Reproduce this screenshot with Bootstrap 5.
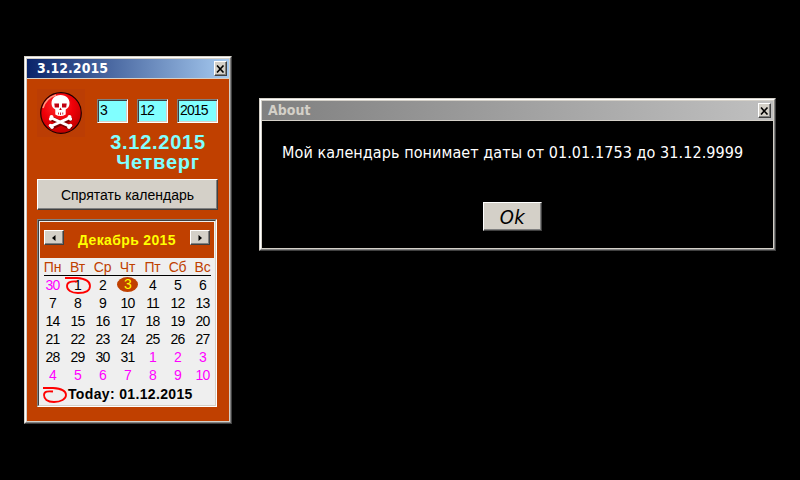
<!DOCTYPE html>
<html lang="ru">
<head>
<meta charset="utf-8">
<title>Календарь</title>
<link href="https://cdn.jsdelivr.net/npm/bootstrap@5.3.0/dist/css/bootstrap.min.css" rel="stylesheet">
<style>
body{background:#000;width:800px;height:480px;font-family:"Liberation Sans",Arial,sans-serif;font-size:14px;line-height:18px;color:#000}
.win{border:1px solid;border-color:#d4d0c8 #404040 #404040 #d4d0c8}
.win-edge{border:1px solid;border-color:#fff #808080 #808080 #fff}
.win-client{border:1px solid #d4d0c8}
.win-cal{left:24px;top:56px;width:208px;height:368px}
.win-about{left:259px;top:98px;width:517px;height:153px}
.title-strip{height:20px;border-bottom:1px solid #d4d0c8;font:bold 14px/19px "DejaVu Sans Condensed","DejaVu Sans",sans-serif;font-stretch:condensed}
.win-cal .title-strip{background:linear-gradient(90deg,#0a246a,#a6caf0);color:#fff;padding:0 2px 0 10px}
.win-about .title-strip{background:linear-gradient(90deg,#808080,#c0c0c0);color:#d4d0c8;padding:0 2px 0 6px}
.key{background:#d4d0c8;border:1px solid;border-color:#fff #404040 #404040 #fff;box-shadow:inset -1px -1px #808080;border-radius:0;padding:0;color:#000;display:flex;align-items:center;justify-content:center;line-height:1}
.key-x{width:13px;height:15px}
.cal-body{background:#c04000;padding:10px 11px 0 10px;height:342px}
.pic{width:48px;height:48px;background:#bb3d04}
.date-in{height:24px;width:31px;border:1px solid;border-color:#808080 #fff #fff #808080;box-shadow:inset 1px 1px #404040,inset -1px -1px #d4d0c8;background:#80ffff;border-radius:0;padding:0 0 2px 2px;font-size:14px;letter-spacing:-.9px;color:#000;outline:0}
.date-in.wide{width:41px}
.inputs{gap:9px;margin-left:12px;padding-top:10px}
.big{color:#80ffff;font-weight:bold;font-size:20px;line-height:20px;letter-spacing:.75px;width:122px;margin:-5px 0 0 60px}
.key-hide{width:181px;height:31px;margin-top:7px;font-size:14px}
.month{width:180px;height:188px;margin-top:9px;border:1px solid;border-color:#808080 #fff #fff #808080;background:#efefef}
.month-in{border:1px solid;border-color:#404040 #d4d0c8 #d4d0c8 #404040;height:186px;padding:1px}
.month-head{background:#c04000;height:36px;color:#ff0;font-weight:bold;letter-spacing:.35px;padding:0 4px}
.key-nav{width:20px;height:15px;margin-top:-5px}
.week{display:grid;grid-template-columns:repeat(7,25px);height:18px;text-align:center;font-size:14px;letter-spacing:-.9px}
.week.names{color:#c04000;border-bottom:1px solid #000;margin:0 3px 0 4px;letter-spacing:-.2px}
.week.names span{margin:0 4px 0 -4px}
.out{color:#f0f}
.picked{background:#c04000;color:#ff0;border-radius:50%;width:21px;height:15px;line-height:15px;margin:1px auto 0}
.ring{left:0;top:0}
.today{font-weight:bold;font-size:14px;letter-spacing:.35px;height:20px;padding-left:28px}
.about-body{height:127px;background:#000;color:#fff;font:16px/20px "DejaVu Sans Condensed","DejaVu Sans",sans-serif;font-stretch:condensed;padding-top:22px}
.msg{letter-spacing:.075px}
.key-ok{width:59px;height:29px;margin:39px 0 0 221px;font:italic 20px/1 "DejaVu Sans Condensed","DejaVu Sans",sans-serif;letter-spacing:.5px}
</style>
</head>
<body class="position-relative overflow-hidden">
<section class="win win-cal position-absolute"><div class="win-edge h-100"><div class="win-client h-100">
  <header class="title-strip d-flex align-items-center justify-content-between"><span>3.12.2015</span>
    <button class="key key-x" aria-label="Close"><svg width="9" height="8" viewBox="0 0 9 8"><path d="M1 .5l6.500 7M7.500 .5l-6.500 7" stroke="#000" stroke-width="1.600"/></svg></button></header>
  <div class="cal-body">
    <div class="d-flex">
      <div class="pic d-flex align-items-center justify-content-center">
        <svg width="44" height="44" viewBox="0 0 44 44">
          <defs><radialGradient id="ball" cx=".42" cy=".32" r=".68"><stop offset="0" stop-color="#ff3030"/><stop offset=".55" stop-color="#f00008"/><stop offset="1" stop-color="#c00000"/></radialGradient></defs>
          <circle cx="22" cy="22" r="20.300" fill="url(#ball)" stroke="#200000" stroke-width="1.200"/>
          <path d="M4 17A19 19 0 0 1 17 4" stroke="#ff9a80" stroke-width="1.500" fill="none"/>
          <path d="M13 28l18 8M31 28l-18 8" stroke="#800000" stroke-width="5" stroke-linecap="round"/>
          <path d="M12.500 27l17.500 8M30 27l-17.500 8" stroke="#fff" stroke-width="3" stroke-linecap="round"/>
          <g fill="#fff"><circle cx="12.500" cy="26" r="2"/><circle cx="11.500" cy="28" r="1.700"/><circle cx="30.500" cy="26" r="2"/><circle cx="31.500" cy="28" r="1.700"/><circle cx="11.500" cy="34.500" r="1.800"/><circle cx="13" cy="36.300" r="1.700"/><circle cx="31.500" cy="34.500" r="1.800"/><circle cx="30" cy="36.300" r="1.700"/>
          <path d="M21.500 4c-6 0-9 3.700-9 8.200 0 3 1.200 4.800 3.800 6.300v5q5.200 3 10.400 0v-5c2.600-1.500 3.800-3.300 3.800-6.300 0-4.500-3-8.200-9-8.200z"/></g>
          <path d="M15.300 12.500h4.700v4h-4.200zM23 12.500h4.700l-.5 4H23zM21.500 16.500l1.300 2.500h-2.600zM19 21.500h.8v2H19zM21.200 21.500h.8v2.500h-.8zM23.400 21.500h.8v2h-.8z" fill="#c00010"/>
        </svg>
      </div>
      <div class="inputs d-flex align-items-start"><input class="date-in" value="3" aria-label="День"><input class="date-in" value="12" aria-label="Месяц"><input class="date-in wide" value="2015" aria-label="Год"></div>
    </div>
    <div class="big text-center"><div>3.12.2015</div><div>Четверг</div></div>
    <button class="key key-hide">Спрятать календарь</button>
    <div class="month"><div class="month-in position-relative">
      <div class="month-head d-flex align-items-center justify-content-between">
        <button class="key key-nav" aria-label="Prev"><svg width="4" height="6" viewBox="0 0 4 6"><path d="M3.500 0v6L0 3z"/></svg></button>
        <span>Декабрь 2015</span>
        <button class="key key-nav" aria-label="Next"><svg width="4" height="6" viewBox="0 0 4 6"><path d="M.5 0v6L4 3z"/></svg></button>
      </div>
      <div class="week names"><span>Пн</span><span>Вт</span><span>Ср</span><span>Чт</span><span>Пт</span><span>Сб</span><span>Вс</span></div>
      <div class="week"><span class="out">30</span><span>1</span><span>2</span><span class="picked">3</span><span>4</span><span>5</span><span>6</span></div>
      <div class="week"><span>7</span><span>8</span><span>9</span><span>10</span><span>11</span><span>12</span><span>13</span></div>
      <div class="week"><span>14</span><span>15</span><span>16</span><span>17</span><span>18</span><span>19</span><span>20</span></div>
      <div class="week"><span>21</span><span>22</span><span>23</span><span>24</span><span>25</span><span>26</span><span>27</span></div>
      <div class="week"><span>28</span><span>29</span><span>30</span><span>31</span><span class="out">1</span><span class="out">2</span><span class="out">3</span></div>
      <div class="week"><span class="out">4</span><span class="out">5</span><span class="out">6</span><span class="out">7</span><span class="out">8</span><span class="out">9</span><span class="out">10</span></div>
      <div class="today d-flex align-items-center text-nowrap">Today: 01.12.2015</div>
      <svg class="ring position-absolute" width="176" height="184" fill="none" stroke="#f00" stroke-width="1.800"><path d="M26 57H38C46 57.500 51 60 51 65S46 72 39 72S28 69 28 65S32 60 38 60.500"/><path d="M4 167H14C22 167.500 27 170 27 174S22 181 15 181S5 178 5 174S9 170 14 170.500"/></svg>
    </div></div>
  </div>
</div></div></section>
<section class="win win-about position-absolute"><div class="win-edge h-100"><div class="win-client h-100">
  <header class="title-strip d-flex align-items-center justify-content-between"><span>About</span>
    <button class="key key-x" aria-label="Close"><svg width="9" height="8" viewBox="0 0 9 8"><path d="M1 .5l6.500 7M7.500 .5l-6.500 7" stroke="#000" stroke-width="1.600"/></svg></button></header>
  <div class="about-body"><div class="msg text-nowrap ps-1 ms-3">Мой календарь понимает даты от 01.01.1753 до 31.12.9999</div>
  <button class="key key-ok">Ok</button></div>
</div></div></section>
<script src="https://cdn.jsdelivr.net/npm/bootstrap@5.3.0/dist/js/bootstrap.bundle.min.js"></script>
</body>
</html>
